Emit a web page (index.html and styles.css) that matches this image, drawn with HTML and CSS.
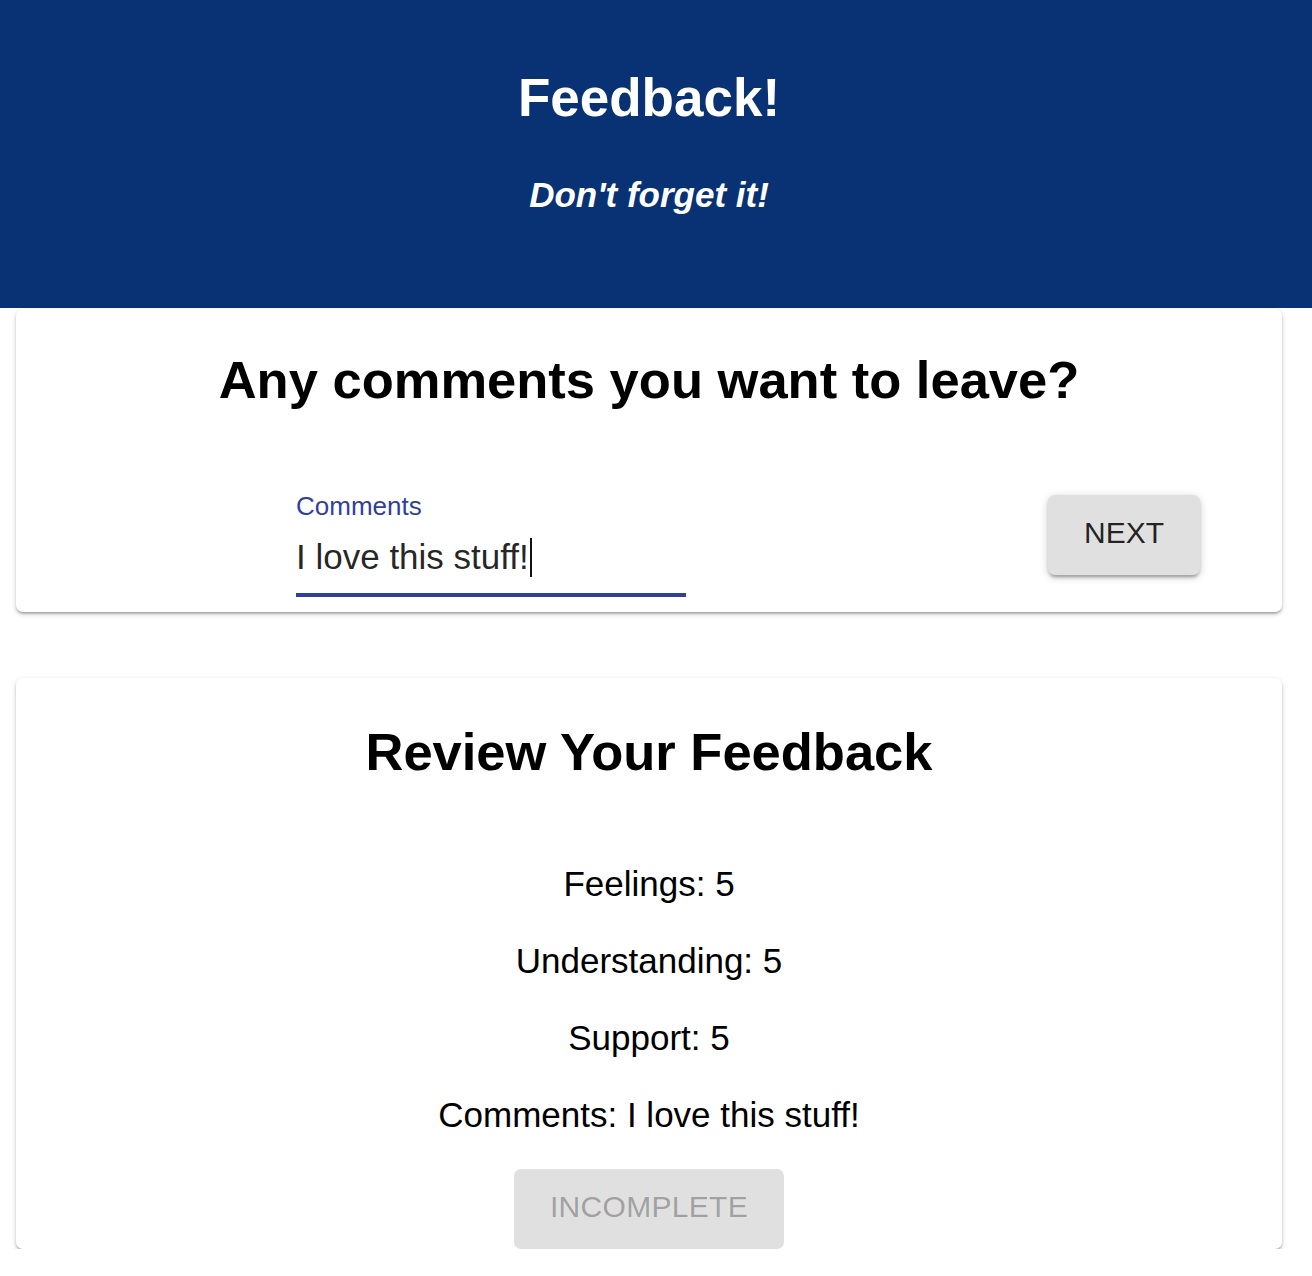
FILE: index.html
```html
<!DOCTYPE html>
<html lang="en">
<head>
<meta charset="utf-8">
<title>Feedback!</title>
<link rel="stylesheet" href="styles.css">
</head>
<body>
<header class="app-header">
  <h1 class="app-title">Feedback!</h1>
  <h4 class="app-subtitle">Don't forget it!</h4>
</header>
<main>
  <section class="card card-comments">
    <h2 class="card-title">Any comments you want to leave?</h2>
    <div class="form-row">
      <div class="field">
        <label class="field-label">Comments</label>
        <div class="field-input">I love this stuff!<span class="caret"></span></div>
      </div>
      <button class="btn btn-next">NEXT</button>
    </div>
  </section>
  <section class="card card-review">
    <h2 class="card-title review-title">Review Your Feedback</h2>
    <div class="review-list">
      <p class="review-line">Feelings: 5</p>
      <p class="review-line">Understanding: 5</p>
      <p class="review-line">Support: 5</p>
      <p class="review-line">Comments: I love this stuff!</p>
    </div>
    <div class="review-actions">
      <button class="btn btn-disabled" disabled>INCOMPLETE</button>
    </div>
  </section>
</main>
</body>
</html>
```

FILE: styles.css
```css
* { box-sizing: border-box; }
html, body { margin: 0; padding: 0; background: #ffffff; }
body {
  font-family: "Liberation Sans", Arial, Helvetica, sans-serif;
  color: #000;
}
.app-header {
  background: #083273;
  height: 308px;
  padding: 71px 14px 0 0;
  text-align: center;
  color: #fff;
}
.app-title {
  margin: 0;
  font-size: 53px;
  line-height: 1;
  font-weight: 700;
}
.app-subtitle {
  margin: 53px 0 0;
  font-size: 35px;
  line-height: 1;
  font-weight: 700;
  font-style: italic;
}
main {
  width: 1298px;
  display: flex;
  flex-direction: column;
  gap: 66px;
  padding: 1px 16px 0;
}
.card {
  background: #fff;
  border-radius: 7px;
  box-shadow: 0 2px 5px rgba(0,0,0,0.2), 0 2px 2px rgba(0,0,0,0.14), 0 3px 2px -2px rgba(0,0,0,0.12);
}
.card-comments {
  padding: 45px 0 15px;
}
.card-title {
  margin: 0;
  text-align: center;
  font-size: 52.5px;
  line-height: 1;
  font-weight: 700;
}
.form-row {
  margin-top: 88px;
  display: flex;
  justify-content: space-between;
  align-items: flex-start;
  padding: 0 82px 0 280px;
}
.field {
  width: 390px;
  display: flex;
  flex-direction: column;
}
.field-label {
  font-size: 26px;
  line-height: 1;
  color: #303f9f;
  margin-top: -2px;
  margin-bottom: 2px;
}
.field-input {
  font-size: 35px;
  line-height: 1;
  height: 76px;
  color: rgba(0,0,0,0.87);
  padding: 18px 0 0;
  border-bottom: 4px solid #303f9f;
  white-space: nowrap;
}
.caret {
  display: inline-block;
  width: 2px;
  height: 39px;
  background: #111;
  vertical-align: baseline;
  margin: -6px 0 -8px 1px;
}
.btn {
  font-family: "Liberation Sans", Arial, Helvetica, sans-serif;
  border: 0;
  border-radius: 7px;
  background: #e0e0e0;
  font-size: 30px;
  line-height: 1;
  padding: 0 0 4px;
  display: flex;
  align-items: center;
  justify-content: center;
}
.btn-next {
  width: 152px;
  height: 80px;
  color: rgba(0,0,0,0.87);
  box-shadow: 0 2px 8px rgba(0,0,0,0.2), 0 3px 3px rgba(0,0,0,0.14), 0 5px 2px -3px rgba(0,0,0,0.12);
}
.card-review {
  padding: 48px 0 0;
}
.review-list {
  margin-top: 88px;
  display: flex;
  flex-direction: column;
  gap: 42px;
}
.review-line {
  margin: 0;
  text-align: center;
  font-size: 35px;
  line-height: 1;
}
.review-actions {
  margin-top: 37px;
  display: flex;
  justify-content: center;
}
.btn-disabled {
  width: 270px;
  height: 80px;
  color: rgba(0,0,0,0.3);
  letter-spacing: 0.3px;
}
```
